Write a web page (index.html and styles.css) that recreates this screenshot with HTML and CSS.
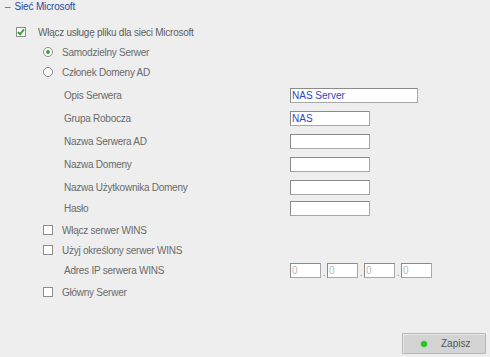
FILE: index.html
```html
<!DOCTYPE html>
<html lang="pl">
<head>
  <meta charset="UTF-8">
  <title>Sieć Microsoft</title>
  <link rel="stylesheet" href="styles.css">
</head>
<body>
  <div class="page">
    <div class="section-title"><span class="toggle">–</span>Sieć Microsoft</div>

    <div class="form">
      <div class="row lvl1">
        <span class="check checked"></span>
        <span class="text">Włącz usługę pliku dla sieci Microsoft</span>
      </div>
      <div class="row lvl2">
        <span class="radio on"></span>
        <span>Samodzielny Serwer</span>
      </div>
      <div class="row lvl2">
        <span class="radio"></span>
        <span>Członek Domeny AD</span>
      </div>

      <div class="row field">
        <label>Opis Serwera</label>
        <input class="input wide" type="text" value="NAS Server">
      </div>
      <div class="row field">
        <label>Grupa Robocza</label>
        <input class="input" type="text" value="NAS">
      </div>
      <div class="row field">
        <label>Nazwa Serwera AD</label>
        <input class="input" type="text">
      </div>
      <div class="row field">
        <label>Nazwa Domeny</label>
        <input class="input" type="text">
      </div>
      <div class="row field">
        <label>Nazwa Użytkownika Domeny</label>
        <input class="input" type="text">
      </div>
      <div class="row field short">
        <label>Hasło</label>
        <input class="input" type="password">
      </div>

      <div class="row lvl2 loose">
        <span class="check"></span>
        <span>Włącz serwer WINS</span>
      </div>
      <div class="row lvl2">
        <span class="check"></span>
        <span>Użyj określony serwer WINS</span>
      </div>
      <div class="row field ip-row">
        <label>Adres IP serwera WINS</label>
        <div class="ip">
          <input class="input octet" type="text" value="0"><span class="sep">.</span>
          <input class="input octet" type="text" value="0"><span class="sep">.</span>
          <input class="input octet" type="text" value="0"><span class="sep">.</span>
          <input class="input octet" type="text" value="0">
        </div>
      </div>
      <div class="row lvl2 loose">
        <span class="check"></span>
        <span>Główny Serwer</span>
      </div>
    </div>

    <div class="footer">
      <button class="btn"><span class="dot"></span>Zapisz</button>
    </div>
  </div>
</body>
</html>
```

FILE: styles.css
```css
body {
  margin: 0;
  background-color: #eeeeee;
  font-family: "Liberation Sans", Arial, sans-serif;
  font-size: 10px;
  letter-spacing: -0.25px;
  color: #6a6a6a;
}

.page {
  height: 357px;
  display: flex;
  flex-direction: column;
}

/* naglowek sekcji */
.section-title {
  height: 13px;
  line-height: 13px;
  padding-left: 5px;
  letter-spacing: -0.15px;
  color: #2b4a9c;
}
.section-title .toggle {
  color: #cc3333;
  margin-right: 4px;
}

.form {
  padding-top: 11px;
}

.row {
  height: 16px;
  margin-top: 4px;
  display: flex;
  align-items: center;
}
.form .row:first-child {
  margin-top: 0;
}
.row.loose {
  margin-top: 6px;
}

.lvl1 {
  padding-left: 16px;
}
.lvl1 .check {
  margin-right: 12px;
}
.lvl1 .text {
  color: #5e5e5e;
}
.lvl2 {
  padding-left: 43px;
}
.lvl2 .check,
.lvl2 .radio {
  margin-right: 9px;
}

/* pola tekstowe */
.row.field {
  margin-top: 7px;
  padding-left: 64px;
}
.row.field.short {
  margin-top: 5px;
}
.row.field.ip-row {
  margin-top: 4px;
}
.row.field label {
  width: 226px;
  flex-shrink: 0;
}

.input {
  box-sizing: border-box;
  width: 80px;
  height: 15px;
  margin: 0;
  padding: 0 1px;
  border: 1px solid #8a8a8a;
  border-right-color: #a8a8a8;
  border-bottom-color: #a8a8a8;
  background: #ffffff;
  font-family: "Liberation Sans", Arial, sans-serif;
  font-size: 10px;
  letter-spacing: 0;
  color: #2f45c8;
  outline: none;
}
.input.wide {
  width: 128px;
}

.ip {
  display: flex;
  align-items: flex-end;
}
.input.octet {
  width: 31px;
  color: #b8b8b8;
}
.sep {
  width: 6px;
  text-align: center;
  line-height: 10px;
  color: #888888;
}

/* checkbox / radio */
.check {
  box-sizing: border-box;
  width: 10px;
  height: 10px;
  border: 1px solid #8c8c8c;
  background: #ffffff;
  flex-shrink: 0;
  position: relative;
}
.check.checked::after {
  content: "";
  position: absolute;
  left: 2px;
  top: 0px;
  width: 2px;
  height: 5px;
  border: solid #3aa33a;
  border-width: 0 2px 2px 0;
  transform: rotate(40deg);
}

.radio {
  box-sizing: border-box;
  width: 10px;
  height: 10px;
  border: 1px solid #8c8c8c;
  border-radius: 50%;
  background: #ffffff;
  flex-shrink: 0;
  display: flex;
  justify-content: center;
  align-items: center;
}
.radio.on::after {
  content: "";
  width: 4px;
  height: 4px;
  border-radius: 50%;
  background: #3aa33a;
}

/* przycisk */
.footer {
  margin-top: auto;
  display: flex;
  justify-content: flex-end;
  padding: 0 4px 3px 0;
}
.btn {
  width: 84px;
  height: 21px;
  padding: 0 0 0 18px;
  display: flex;
  align-items: center;
  border: 1px solid #b9b9b9;
  box-shadow: inset 1px 1px 0 #e6e6e6;
  background: #d4d4d4;
  font-family: "Liberation Sans", Arial, sans-serif;
  font-size: 10px;
  letter-spacing: 0;
  color: #555555;
  cursor: pointer;
}
.btn .dot {
  width: 6px;
  height: 6px;
  border-radius: 50%;
  background: #22c322;
  box-shadow: 0 0 2px #7be07b;
  margin-right: 14px;
}
```
